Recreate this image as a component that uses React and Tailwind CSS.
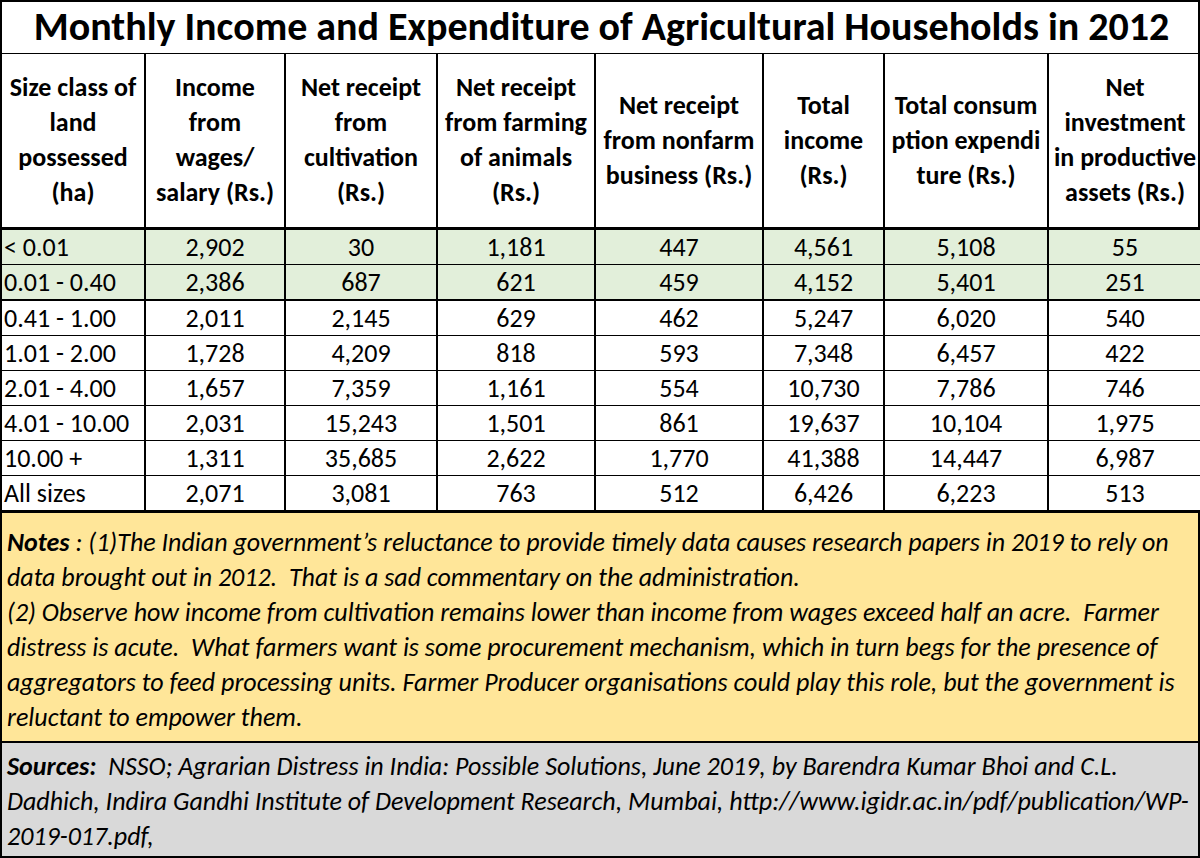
import React from 'react'

const font = { fontFamily: 'Carlito, Calibri, Lato, "Noto Sans", sans-serif' }

const heads = [
  ['Size class of', 'land', 'possessed', '(ha)'],
  ['Income', 'from', 'wages/', 'salary (Rs.)'],
  ['Net receipt', 'from', 'cultivation', '(Rs.)'],
  ['Net receipt', 'from farming', 'of animals', '(Rs.)'],
  ['Net receipt', 'from nonfarm', 'business (Rs.)'],
  ['Total', 'income', '(Rs.)'],
  ['Total consum', 'ption expendi', 'ture (Rs.)'],
  ['Net', 'investment', 'in productive', 'assets (Rs.)'],
]

const rows = [
  ['< 0.01', '2,902', '30', '1,181', '447', '4,561', '5,108', '55'],
  ['0.01 - 0.40', '2,386', '687', '621', '459', '4,152', '5,401', '251'],
  ['0.41 - 1.00', '2,011', '2,145', '629', '462', '5,247', '6,020', '540'],
  ['1.01 - 2.00', '1,728', '4,209', '818', '593', '7,348', '6,457', '422'],
  ['2.01 - 4.00', '1,657', '7,359', '1,161', '554', '10,730', '7,786', '746'],
  ['4.01 - 10.00', '2,031', '15,243', '1,501', '861', '19,637', '10,104', '1,975'],
  ['10.00 +', '1,311', '35,685', '2,622', '1,770', '41,388', '14,447', '6,987'],
  ['All sizes', '2,071', '3,081', '763', '512', '6,426', '6,223', '513'],
]

const widths = ['w-[143px]', 'w-[140px]', 'w-[152px]', 'w-[158px]', 'w-[168px]', 'w-[121px]', 'w-[164px]', 'w-[153px]']

function rowBorder(i) {
  if (i === 1) return 'border-b-2'
  if (i === 7) return 'border-b-[3px]'
  return 'border-b'
}

export default function App() {
  return (
    <div className="w-[1200px] h-[858px] bg-white text-black overflow-hidden" style={font}>
      <div className="border-2 border-black">
        <table className="table-fixed border-collapse w-full">
          <colgroup>
            {widths.map((w, i) => <col key={i} className={w} />)}
          </colgroup>
          <thead>
            <tr className="h-[51px]">
              <th colSpan={8} className="border-b border-black text-[40px] font-bold leading-none text-center align-middle">
                Monthly Income and Expenditure of Agricultural Households in 2012
              </th>
            </tr>
            <tr className="h-[175px]">
              {heads.map((h, i) => (
                <th key={i} className={`border-b-[3px] border-black ${i > 0 ? 'border-l-2' : ''} text-[26px] font-bold leading-[35px] text-center align-middle px-0`}>
                  {h.map((l, j) => <div key={j} className="whitespace-nowrap">{l}</div>)}
                </th>
              ))}
            </tr>
          </thead>
          <tbody>
            {rows.map((r, i) => (
              <tr key={i} className={`h-[35px] ${i < 2 ? 'bg-[#e2efda]' : 'bg-white'}`}>
                {r.map((c, j) => (
                  <td key={j} className={`${rowBorder(i)} border-black ${j > 0 ? 'border-l-2 text-center' : 'text-left pl-[2px]'} text-[26px] leading-[34px] p-0 whitespace-nowrap`}>
                    {c}
                  </td>
                ))}
              </tr>
            ))}
          </tbody>
        </table>
        <div className="bg-[#ffe699] border-b-2 border-black h-[230px] pt-[12px] pl-[5px] text-[26px] leading-[35px] italic whitespace-nowrap">
          <div><span className="font-bold">Notes</span> : (1)The Indian government’s reluctance to provide timely data causes research papers in 2019 to rely on</div>
          <div>data brought out in 2012.&nbsp; That is a sad commentary on the administration.</div>
          <div>(2) Observe how income from cultivation remains lower than income from wages exceed half an acre.&nbsp; Farmer</div>
          <div>distress is acute.&nbsp; What farmers want is some procurement mechanism, which in turn begs for the presence of</div>
          <div>aggregators to feed processing units. Farmer Producer organisations could play this role, but the government is</div>
          <div>reluctant to empower them.</div>
        </div>
        <div className="bg-[#d9d9d9] h-[113px] pt-[6px] pl-[5px] text-[26px] leading-[35px] italic whitespace-nowrap">
          <div><span className="font-bold">Sources:</span>&nbsp; NSSO; Agrarian Distress in India: Possible Solutions, June 2019, by Barendra Kumar Bhoi and C.L.</div>
          <div>Dadhich, Indira Gandhi Institute of Development Research, Mumbai, http://www.igidr.ac.in/pdf/publication/WP-</div>
          <div>2019-017.pdf,</div>
        </div>
      </div>
    </div>
  )
}
